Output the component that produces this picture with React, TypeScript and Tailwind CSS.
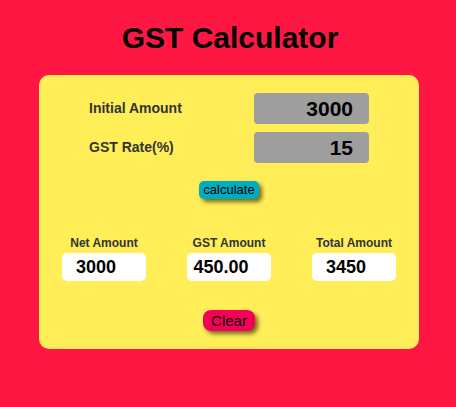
export default function App() {
  return (
    <div className="min-h-[407px] w-full bg-[#ff1744] pt-[20px] font-['Liberation_Sans',Arial,sans-serif]">
      <h1 className="text-center text-[30px] font-bold leading-[36px] text-black pl-[4px]">GST Calculator</h1>

      <div className="ml-[39px] mt-[19px] h-[274px] w-[380px] rounded-[10px] bg-[#ffee58] pt-[18px]">
        <div className="flex items-center pl-[50px]">
          <span className="w-[165px] text-[14px] font-bold text-[#333]">Initial Amount</span>
          <div className="flex h-[31px] w-[115px] items-center justify-end rounded-[4px] bg-[#9e9e9e] pr-[16px] text-[21px] font-bold text-black">
            3000
          </div>
        </div>
        <div className="mt-[8px] flex items-center pl-[50px]">
          <span className="w-[165px] text-[14px] font-bold text-[#333]">GST Rate(%)</span>
          <div className="flex h-[31px] w-[115px] items-center justify-end rounded-[4px] bg-[#9e9e9e] pr-[16px] text-[21px] font-bold text-black">
            15
          </div>
        </div>

        <div className="mt-[18px] flex justify-center">
          <button className="h-[18px] rounded-[5px] bg-[#00acc1] px-[4px] text-[13px] leading-[18px] text-black shadow-[3px_3px_4px_rgba(60,50,0,0.7)]">
            calculate
          </button>
        </div>

        <div className="mt-[37px] flex justify-center">
          {[
            { label: 'Net Amount', value: '3000' },
            { label: 'GST Amount', value: '450.00' },
            { label: 'Total Amount', value: '3450' },
          ].map((c) => (
            <div key={c.label} className="flex w-[125px] flex-col items-center">
              <span className="text-[12px] font-bold leading-[14px] text-[#333]">{c.label}</span>
              <div className="mt-[3px] flex h-[28px] w-[84px] items-center justify-center rounded-[5px] bg-white pr-[16px] text-[18px] font-bold text-black">
                {c.value}
              </div>
            </div>
          ))}
        </div>

        <div className="mt-[29px] flex justify-center">
          <button className="h-[21px] rounded-[8px] bg-[#f50057] px-[8px] text-[15px] leading-[21px] text-black shadow-[3px_3px_4px_rgba(60,50,0,0.7)]">
            Clear
          </button>
        </div>
      </div>
    </div>
  );
}
